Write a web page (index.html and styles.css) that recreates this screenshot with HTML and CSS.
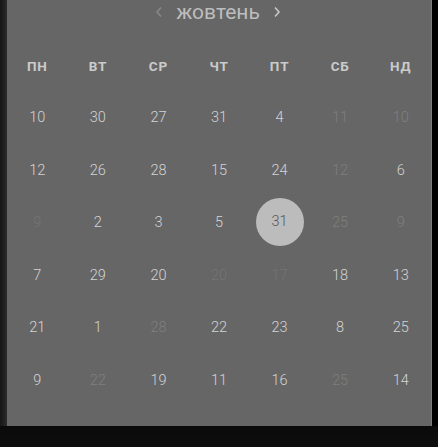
FILE: index.html
```html
<!DOCTYPE html>
<html lang="uk">
<head>
<meta charset="utf-8">
<link rel="stylesheet" href="styles.css">
</head>
<body>
<div class="screen">
  <div class="frame">
    <div class="edge-left"></div>
    <div class="panel">
      <div class="month-bar">
        <span class="chev chev-prev"><svg width="8" height="12" viewBox="0 0 8 12"><path d="M6 1.5 L2 6 L6 10.5" fill="none" stroke="currentColor" stroke-width="1.6"/></svg></span>
        <span class="month">жовтень</span>
        <span class="chev chev-next"><svg width="8" height="12" viewBox="0 0 8 12"><path d="M2 1.5 L6 6 L2 10.5" fill="none" stroke="currentColor" stroke-width="1.6"/></svg></span>
      </div>
      <div class="weekdays">
        <span>ПН</span><span>ВТ</span><span>СР</span><span>ЧТ</span><span>ПТ</span><span>СБ</span><span>НД</span>
      </div>
      <div class="days">
        <span class="day">10</span><span class="day">30</span><span class="day">27</span><span class="day">31</span><span class="day">4</span><span class="day dim">11</span><span class="day dim">10</span>
        <span class="day">12</span><span class="day">26</span><span class="day">28</span><span class="day">15</span><span class="day">24</span><span class="day dim">12</span><span class="day">6</span>
        <span class="day dim faint">9</span><span class="day">2</span><span class="day">3</span><span class="day">5</span><span class="day selected"><span class="dot">31</span></span><span class="day dim">25</span><span class="day dim">9</span>
        <span class="day">7</span><span class="day">29</span><span class="day">20</span><span class="day dim faint">20</span><span class="day dim faint">17</span><span class="day">18</span><span class="day">13</span>
        <span class="day">21</span><span class="day">1</span><span class="day dim">28</span><span class="day">22</span><span class="day">23</span><span class="day">8</span><span class="day">25</span>
        <span class="day">9</span><span class="day dim">22</span><span class="day">19</span><span class="day">11</span><span class="day">16</span><span class="day dim">25</span><span class="day">14</span>
      </div>
    </div>
    <div class="edge-right"></div>
  </div>
  <div class="bottom"></div>
</div>
</body>
</html>
```

FILE: styles.css
```css
html, body {
  margin: 0;
  padding: 0;
  background: #0c0c0c;
}

.screen {
  width: 438px;
  height: 447px;
  overflow: hidden;
  font-family: Roboto, "Liberation Sans", sans-serif;
}

.frame {
  display: flex;
  height: 426px;
}

.edge-left {
  width: 7px;
  background: linear-gradient(to right, #161616, #2b2b2b);
}

.panel {
  width: 424px;
  background: #666666;
  border-right: 1px solid #7c7c7c;
  box-sizing: content-box;
}

.edge-right {
  flex: 1;
  background: #000;
}

.bottom {
  height: 21px;
  background: linear-gradient(to bottom, #0a0a0a, #0e0e0e);
}

.month-bar {
  height: 27px;
  display: flex;
  align-items: center;
  justify-content: center;
  gap: 13px;
  padding-right: 2px;
}

.month {
  font-size: 21px;
  line-height: 27px;
  color: #bdbdbd;
  position: relative;
  top: -1px;
}

.chev {
  display: flex;
  align-items: center;
  height: 27px;
  position: relative;
  top: -2px;
}

.chev-prev { color: #878787; }
.chev-next { color: #c8c8c8; }

.weekdays {
  display: grid;
  grid-template-columns: repeat(7, 1fr);
  margin-top: 26px;
  height: 26px;
  align-items: center;
  justify-items: center;
  font-size: 13.5px;
  font-weight: 700;
  color: #cbcbcb;
  letter-spacing: 0.8px;
}

.days {
  display: grid;
  grid-template-columns: repeat(7, 1fr);
  grid-auto-rows: 52.5px;
  margin-top: 13px;
  align-items: center;
  justify-items: center;
  font-size: 14.5px;
  font-weight: 300;
  color: #d4d4d4;
}

.day {
  line-height: 20px;
}

.dim { color: #7f7f7f; }
.dim.faint { color: #747474; }

.dot {
  width: 48px;
  height: 48px;
  border-radius: 50%;
  background: #bcbcbc;
  color: #555;
  display: flex;
  align-items: center;
  justify-content: center;
  position: relative;
  top: -1px;
}
```
